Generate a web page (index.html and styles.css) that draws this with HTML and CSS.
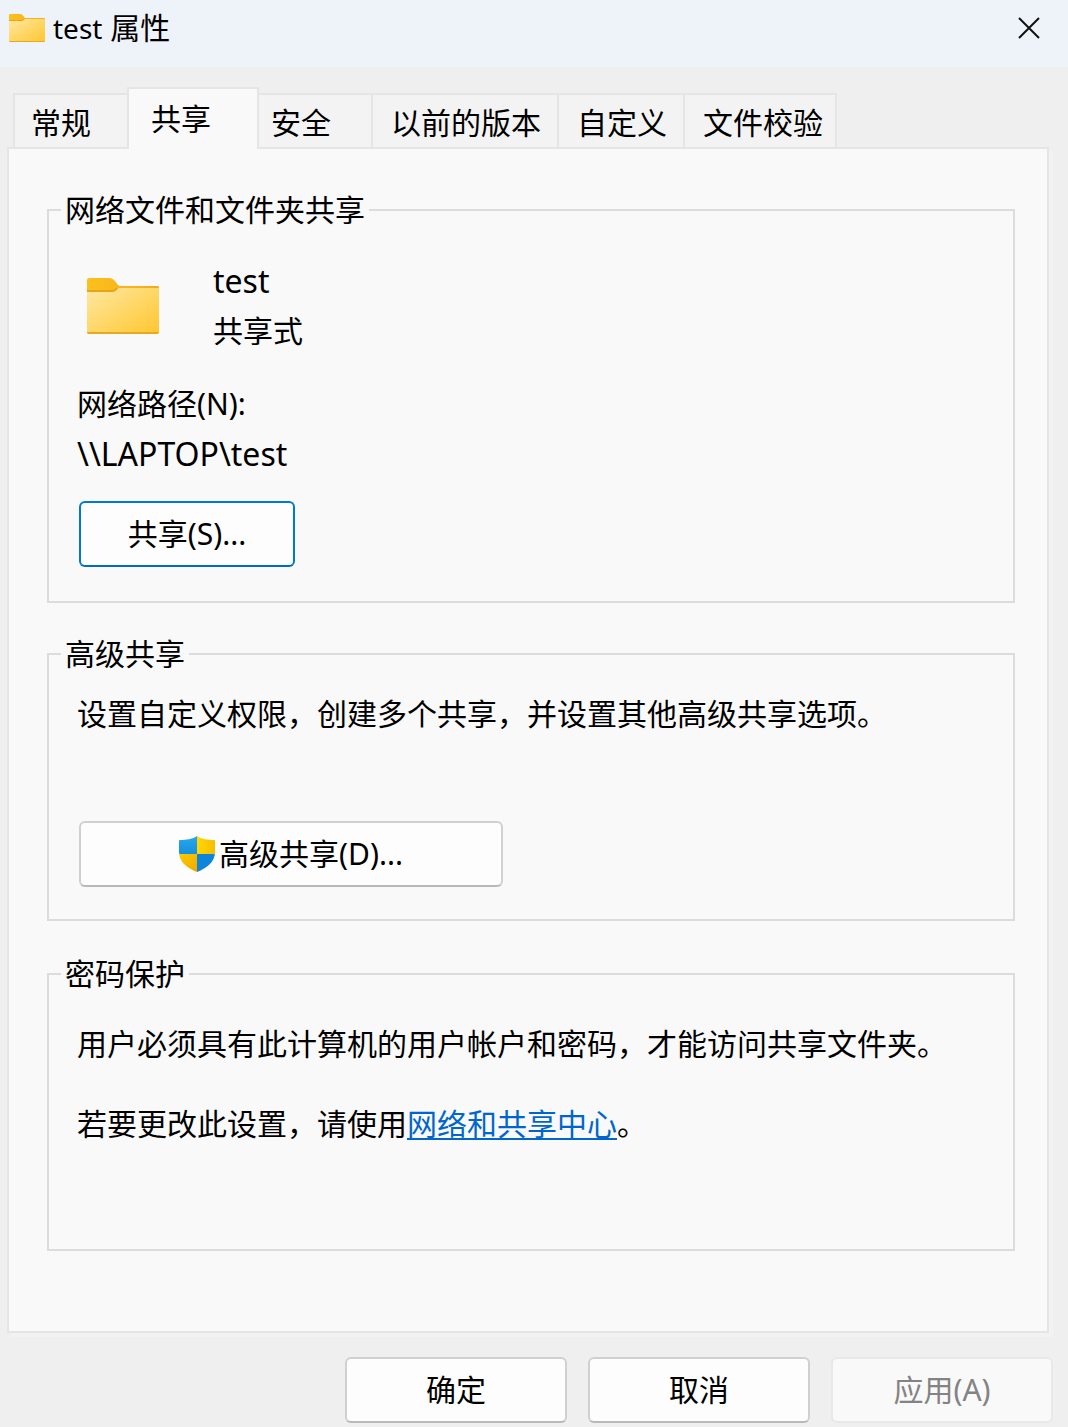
FILE: index.html
```html
<!DOCTYPE html>
<html lang="zh-CN">
<head>
<meta charset="utf-8">
<meta name="viewport" content="width=device-width, initial-scale=1">
<title>test 属性</title>
<link rel="stylesheet" href="styles.css">
</head>
<body>
<svg class="defs" width="0" height="0" aria-hidden="true">
  <defs>
    <linearGradient id="folder-front" x1="0" y1="0" x2="1" y2="1">
      <stop offset="0" stop-color="#ffe8a2"/>
      <stop offset="1" stop-color="#ffc62f"/>
    </linearGradient>
    <linearGradient id="folder-back" x1="0" y1="0" x2="1" y2="0">
      <stop offset="0" stop-color="#fdc01c"/>
      <stop offset="1" stop-color="#f2ab1d"/>
    </linearGradient>
    <symbol id="folder" viewBox="0 0 72 56">
      <path d="M0 2Q0 0 2 0H22Q25 0 27 2L31 7Q32 8 34 8H71Q72 8 72 10V30H0Z" fill="url(#folder-back)"/>
      <path d="M0 14H25Q28 14 30 11Q31 10 33 10H72V54Q72 56 70 56H2Q0 56 0 54Z" fill="url(#folder-front)"/>
      <path d="M0 13H25Q28 13 30 10" fill="none" stroke="#e5a41c" stroke-width="2"/>
      <path d="M0 54H72Q72 56 70 56H2Q0 56 0 54Z" fill="#e8a922"/>
    </symbol>
    <linearGradient id="shield-blue" x1="0" y1="0" x2="0" y2="1">
      <stop offset="0" stop-color="#2aa7ea"/>
      <stop offset="1" stop-color="#1490df"/>
    </linearGradient>
    <linearGradient id="shield-yellow" x1="0" y1="0" x2="1" y2="0">
      <stop offset="0" stop-color="#ffd800"/>
      <stop offset="1" stop-color="#f8bd00"/>
    </linearGradient>
    <linearGradient id="shield-gold" x1="0" y1="0" x2="1" y2="1">
      <stop offset="0" stop-color="#ffca00"/>
      <stop offset="1" stop-color="#eda900"/>
    </linearGradient>
    <clipPath id="shield-shape">
      <path d="M18 0C14 3 7 4 1 4Q0 4 0 5V16C0 26 8 32 18 36C28 32 36 26 36 16V5Q36 4 35 4C29 4 22 3 18 0Z"/>
    </clipPath>
  </defs>
</svg>
<div class="dialog">
  <header class="titlebar">
    <svg class="title-icon" aria-hidden="true"><use href="#folder"/></svg>
    <h1 class="title"><span class="title-name">test</span> 属性</h1>
    <button class="close" type="button" aria-label="关闭">
      <svg width="22" height="22" viewBox="0 0 22 22" aria-hidden="true"><path d="M1 1L21 21M21 1L1 21" stroke="#111" stroke-width="2" fill="none"/></svg>
    </button>
  </header>
  <main class="body">
    <div class="tabs" role="tablist">
      <button class="tab tab-first" type="button" role="tab">常规</button>
      <button class="tab tab-active" type="button" role="tab" aria-selected="true">共享</button>
      <button class="tab tab-after" type="button" role="tab">安全</button>
      <button class="tab" type="button" role="tab">以前的版本</button>
      <button class="tab" type="button" role="tab">自定义</button>
      <button class="tab tab-last" type="button" role="tab">文件校验</button>
    </div>
    <form class="panel" role="tabpanel">
      <fieldset class="group group-share">
        <legend>网络文件和文件夹共享</legend>
        <div class="item">
          <svg class="item-icon" aria-hidden="true"><use href="#folder"/></svg>
          <div>
            <p class="name">test</p>
            <p>共享式</p>
          </div>
        </div>
        <div class="path">
          <p>网络路径(N):</p>
          <p class="name">\\LAPTOP\test</p>
        </div>
        <button class="btn btn-default btn-share" type="button">共享(S)...</button>
      </fieldset>
      <fieldset class="group group-advanced">
        <legend>高级共享</legend>
        <p>设置自定义权限，创建多个共享，并设置其他高级共享选项。</p>
        <button class="btn btn-advanced" type="button">
          <svg class="shield" width="36" height="36" viewBox="0 0 36 36" aria-hidden="true">
            <g clip-path="url(#shield-shape)">
              <path d="M0 0H18V18H0Z" fill="url(#shield-blue)"/>
              <path d="M18 0H36V18H18Z" fill="url(#shield-yellow)"/>
              <path d="M0 18H18V36H0Z" fill="url(#shield-gold)"/>
              <path d="M18 18H36V36H18Z" fill="#0f85d9"/>
            </g>
          </svg>
          <span>高级共享(D)...</span>
        </button>
      </fieldset>
      <fieldset class="group group-password">
        <legend>密码保护</legend>
        <p>用户必须具有此计算机的用户帐户和密码，才能访问共享文件夹。</p>
        <p>若要更改此设置，请使用<a href="#">网络和共享中心</a>。</p>
      </fieldset>
    </form>
  </main>
  <footer class="actions">
    <button class="btn" type="button">确定</button>
    <button class="btn" type="button">取消</button>
    <button class="btn" type="button" disabled>应用(A)</button>
  </footer>
</div>
</body>
</html>
```
FILE: styles.css
```css
* {
  box-sizing: border-box;
}

body {
  margin: 0;
  background: #efefef;
  color: #000;
  font: 30px/50px "Noto Sans", "Noto Sans CJK SC", sans-serif;
}

button {
  font: inherit;
  color: inherit;
}

p {
  margin: 0;
}

.defs {
  position: absolute;
}

.titlebar {
  display: flex;
  align-items: center;
  height: 67px;
  padding: 0 28px 11px 9px;
  background: #eef3f9;
}

.title-icon {
  width: 36px;
  height: 28px;
}

.title {
  flex: 1;
  margin: 0 0 0 8px;
  font-size: 30px;
  font-weight: 400;
}

.title-name {
  font-size: 28px;
}

.close {
  display: flex;
  padding: 0;
  border: 0;
  background: none;
}

.body {
  padding: 20px 19px 0 7px;
}

.tabs {
  display: flex;
  align-items: flex-end;
  padding-left: 6px;
}

.tab {
  height: 54px;
  padding: 4px 16px 0 18px;
  border: 0 solid #e5e5e5;
  border-width: 2px 2px 0 0;
  background: #f3f3f3;
  line-height: 48px;
  text-align: left;
  white-space: nowrap;
}

.tab-first {
  padding: 4px 36px 0 16px;
  border-width: 2px 0 0 2px;
}

.tab-active {
  position: relative;
  height: 62px;
  margin-bottom: -2px;
  padding: 0 46px 0 22px;
  border-width: 2px 2px 0;
  background: #f9f9f9;
}

.tab-after {
  padding: 4px 40px 0 12px;
}

.tab-last {
  padding-right: 12px;
}

.panel {
  padding: 41px 32px 80px 38px;
  border: 2px solid #e5e5e5;
  background: #f9f9f9;
  box-shadow: 4px 4px 0 #f2f2f2;
}

.group {
  min-width: 0;
  margin: 0;
  padding: 0 28px;
  border: 2px solid #dcdcdc;
}

.group legend {
  margin-left: -16px;
  padding: 0 4px;
  line-height: 40px;
}

.group-share {
  padding-top: 26px;
  padding-bottom: 34px;
}

.group-advanced {
  margin-top: 31px;
  padding-top: 15px;
  padding-bottom: 32px;
}

.group-password {
  margin-top: 33px;
  padding-top: 25px;
  padding-bottom: 100px;
}

.group-password p + p {
  margin-top: 30px;
}

.item {
  display: flex;
  align-items: center;
  gap: 54px;
  padding-left: 10px;
}

.item-icon {
  width: 72px;
  height: 56px;
}

.name {
  font-size: 32px;
}

.path {
  margin-top: 23px;
}

a {
  color: #0066cc;
  text-decoration-thickness: 2px;
  text-underline-offset: 3px;
}

.btn {
  display: flex;
  align-items: center;
  justify-content: center;
  width: 222px;
  height: 66px;
  padding: 0;
  border: 2px solid #d0d0d0;
  border-bottom-color: #b9b9b9;
  border-radius: 6px;
  background: #fdfdfd;
}

.btn:disabled {
  border-color: #e8e8e8;
  background: #f9f9f9;
  color: #838383;
}

.btn-default {
  border-color: #0078d4;
  border-bottom-color: #006cbe;
}

.btn-share {
  width: 216px;
  margin: 22px 0 0 2px;
}

.btn-advanced {
  gap: 4px;
  width: 424px;
  margin: 82px 0 0 2px;
}

.actions {
  display: flex;
  justify-content: flex-end;
  gap: 21px;
  padding: 24px 15px 4px;
}
```
